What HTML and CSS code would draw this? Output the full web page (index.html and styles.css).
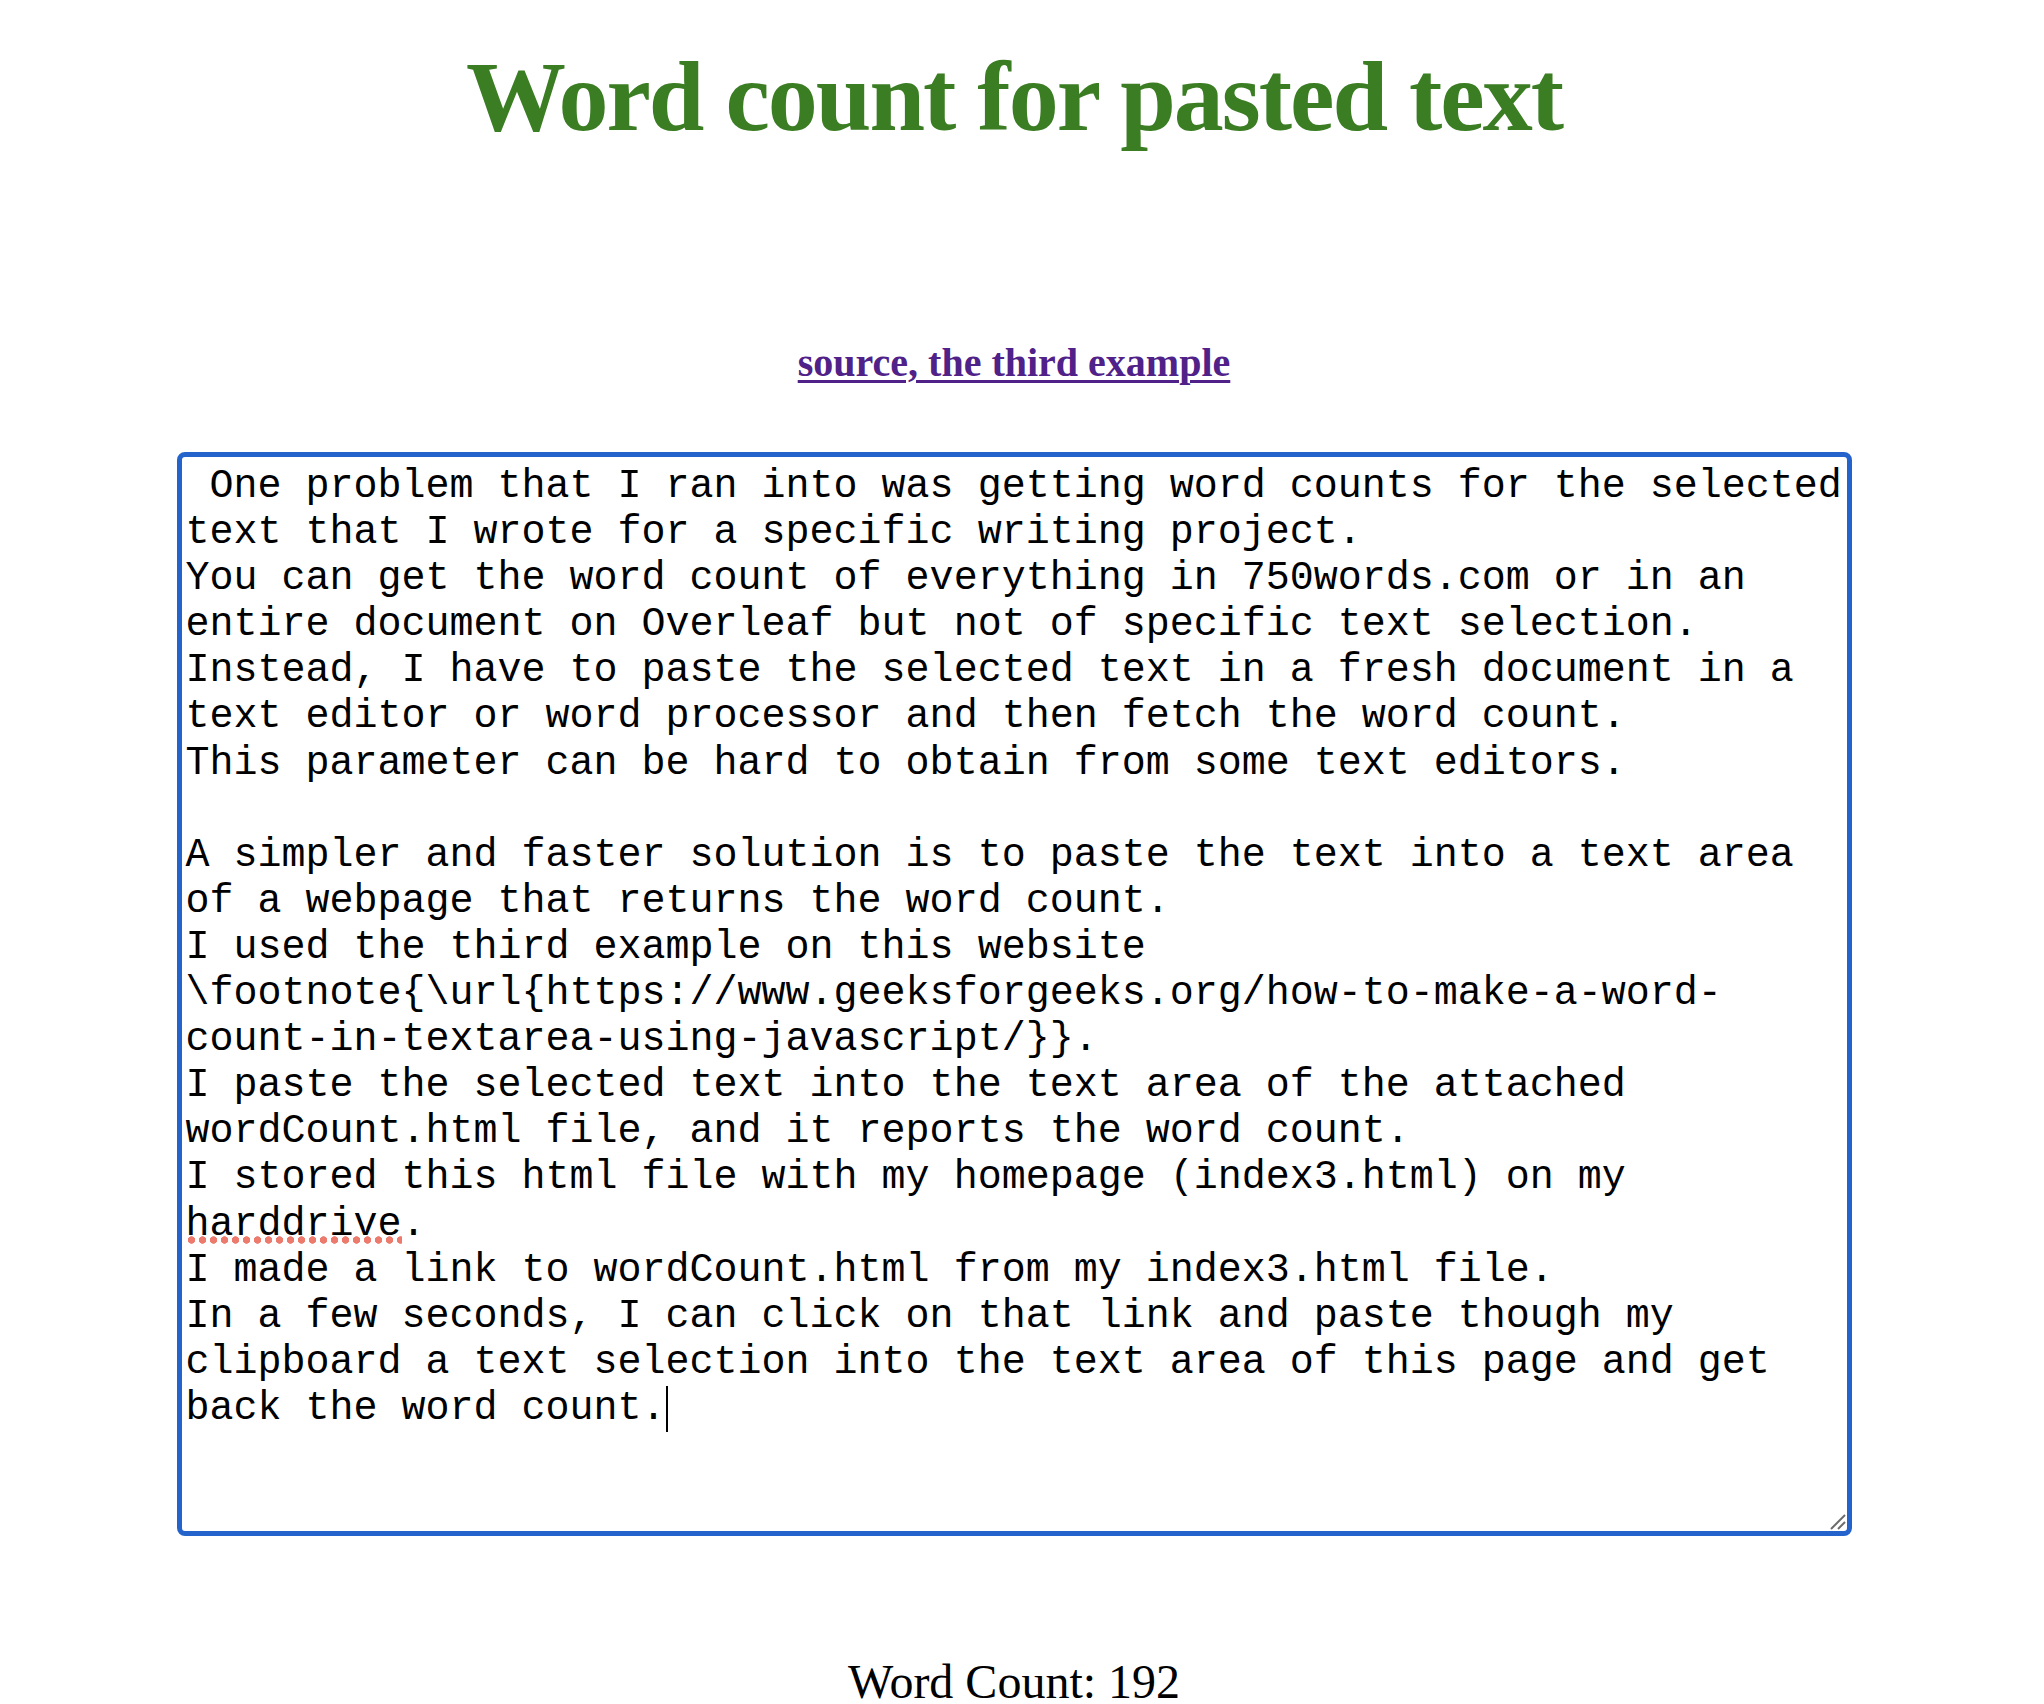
FILE: index.html
```html
<!DOCTYPE html>
<html lang="en">
<head>
<meta charset="utf-8">
<title>Word count for pasted text</title>
<link rel="stylesheet" href="styles.css">
</head>
<body>
<main class="page">
  <h1 class="title">Word count for pasted text</h1>
  <a class="source-link" href="#">source, the third example</a>
  <div class="editor">
<pre class="editor-text"> One problem that I ran into was getting word counts for the selected
text that I wrote for a specific writing project.
You can get the word count of everything in 750words.com or in an
entire document on Overleaf but not of specific text selection.
Instead, I have to paste the selected text in a fresh document in a
text editor or word processor and then fetch the word count.
This parameter can be hard to obtain from some text editors.

A simpler and faster solution is to paste the text into a text area
of a webpage that returns the word count.
I used the third example on this website
\footnote{\url{https://www.geeksforgeeks.org/how-to-make-a-word-
count-in-textarea-using-javascript/}}.
I paste the selected text into the text area of the attached
wordCount.html file, and it reports the word count.
I stored this html file with my homepage (index3.html) on my
<span class="misspelled">harddrive</span>.
I made a link to wordCount.html from my index3.html file.
In a few seconds, I can click on that link and paste though my
clipboard a text selection into the text area of this page and get
back the word count.<span class="caret"></span></pre>
    <svg class="grip" width="16" height="16" viewBox="0 0 16 16" aria-hidden="true">
      <line x1="1" y1="15" x2="15" y2="1" stroke="#6b6b6b" stroke-width="2"/>
      <line x1="8" y1="15" x2="15" y2="8" stroke="#6b6b6b" stroke-width="2"/>
    </svg>
  </div>
  <p class="count">Word Count: 192</p>
</main>
</body>
</html>
```

FILE: styles.css
```css
html, body {
  margin: 0;
  padding: 0;
  background: #ffffff;
}

.page {
  width: 2028px;
  display: flex;
  flex-direction: column;
  align-items: center;
}

.title {
  margin: 39px 0 0;
  font-family: "Liberation Serif", "Times New Roman", serif;
  font-weight: bold;
  font-size: 100px;
  line-height: 115px;
  letter-spacing: -2px;
  color: #3a7d22;
}

.source-link {
  margin-top: 186px;
  font-family: "Liberation Serif", "Times New Roman", serif;
  font-weight: bold;
  font-size: 40px;
  line-height: 46px;
  color: #4f2189;
  text-decoration: underline;
  text-decoration-thickness: 3px;
  text-underline-offset: 4px;
}

.editor {
  position: relative;
  box-sizing: border-box;
  margin-top: 66px;
  width: 1675px;
  height: 1084px;
  border: 5px solid #2463cc;
  border-radius: 8px;
  padding: 7px 4px 4px;
  background: #ffffff;
}

.editor-text {
  margin: 0;
  font-family: "Liberation Mono", "Courier New", monospace;
  font-size: 40px;
  line-height: 46.1px;
  color: #000000;
  white-space: pre;
}

.misspelled {
  position: relative;
}

.misspelled::after {
  content: "";
  position: absolute;
  left: 0;
  right: 0;
  top: 34px;
  height: 8px;
  background-image: radial-gradient(circle, #ec7a6d 3.4px, rgba(236, 122, 109, 0) 4px);
  background-size: 11px 8px;
  background-repeat: repeat-x;
  background-position: 0 0;
}

.caret {
  display: inline-block;
  width: 2px;
  height: 46px;
  background: #000000;
  vertical-align: top;
}

.grip {
  position: absolute;
  right: 1px;
  bottom: 1px;
}

.count {
  margin: 118px 0 0;
  font-family: "Liberation Serif", "Times New Roman", serif;
  font-size: 48px;
  line-height: 55px;
  color: #000000;
}
```
